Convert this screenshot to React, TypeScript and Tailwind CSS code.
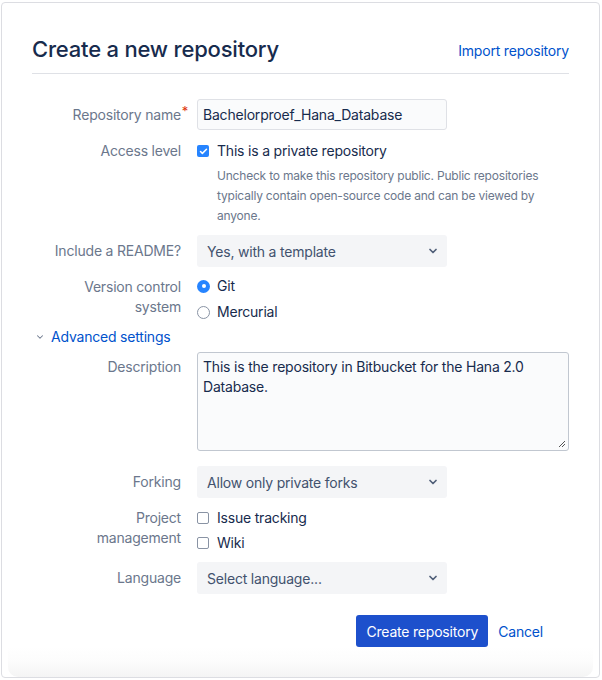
import { ChevronDown, Check } from "lucide-react";

function Label({ children, required }: { children: React.ReactNode; required?: boolean }) {
  return (
    <div className="w-[150px] shrink-0 pr-[1px] text-right text-[14px] leading-[20px] text-[#6b778c]">
      <span className="relative">
        {children}
        {required && (
          <span className="absolute -right-[7px] -top-[5px] text-[13px] text-[#de350b]">*</span>
        )}
      </span>
    </div>
  );
}

function Select({ value }: { value: string }) {
  return (
    <div className="flex h-[32px] w-[250px] items-center justify-between rounded-[3px] bg-[#f4f5f7] pl-[10px] pr-[8px] text-[14px] text-[#42526e]">
      <span>{value}</span>
      <ChevronDown className="h-[12px] w-[12px] text-[#505f79]" strokeWidth={3.5} />
    </div>
  );
}

function Box({ checked }: { checked?: boolean }) {
  return checked ? (
    <span className="flex h-[12px] w-[12px] items-center justify-center rounded-[2px] bg-[#2684ff]">
      <Check className="h-[9px] w-[9px] text-white" strokeWidth={4} />
    </span>
  ) : (
    <span className="h-[12px] w-[12px] rounded-[2px] border border-[#8993a4] bg-white" />
  );
}

function Radio({ checked }: { checked?: boolean }) {
  return checked ? (
    <span className="flex h-[13px] w-[13px] items-center justify-center rounded-full bg-[#2684ff]">
      <span className="h-[4px] w-[4px] rounded-full bg-white" />
    </span>
  ) : (
    <span className="h-[13px] w-[13px] rounded-full border border-[#8993a4] bg-white" />
  );
}

export default function App() {
  return (
    <div
      className="h-[680px] w-[602px] bg-white pt-[2px] pl-[1px] tracking-[-0.2px]"
      style={{ fontFamily: "Inter, 'Noto Sans', sans-serif" }}
    >
      <div className="flex h-[676px] w-[599px] flex-col rounded-[4px] border border-[#dcdde2] bg-white">
        <div className="flex-1 px-[30px]">
          {/* header */}
          <div className="flex items-end justify-between border-b border-[#dfe1e6] pt-[30px] pb-[8px]">
            <h1 className="text-[22px] font-medium leading-[32px] tracking-[-0.2px] text-[#172b4d]">
              Create a new repository
            </h1>
            <a className="pb-[4px] text-[14px] text-[#0052cc]">Import repository</a>
          </div>

          {/* repo name */}
          <div className="mt-[25px] flex items-center gap-[15px]">
            <Label required>Repository name</Label>
            <div className="flex h-[31px] w-[250px] items-center rounded-[3px] border border-[#dfe1e6] bg-[#fafbfc] px-[5px] text-[14px] text-[#172b4d]">
              Bachelorproef_Hana_Database
            </div>
          </div>

          {/* access */}
          <div className="mt-[11px] flex gap-[15px]">
            <Label>Access level</Label>
            <div>
              <label className="flex items-center gap-[8px] text-[14px] leading-[20px] text-[#172b4d]">
                <Box checked />
                This is a private repository
              </label>
              <p className="mt-[5px] w-[360px] pl-[20px] text-[12px] leading-[20px] text-[#6b778c]">
                Uncheck to make this repository public. Public repositories typically contain open-source code and can be viewed by anyone.
              </p>
            </div>
          </div>

          {/* readme */}
          <div className="mt-[9px] flex items-center gap-[15px]">
            <Label>Include a README?</Label>
            <Select value="Yes, with a template" />
          </div>

          {/* vcs */}
          <div className="mt-[9px] flex gap-[15px]">
            <div className="pt-[1px]">
              <Label>
                Version control
                <br />
                system
              </Label>
            </div>
            <div className="flex flex-col gap-[6px] text-[14px] leading-[20px] text-[#172b4d]">
              <label className="flex items-center gap-[7px]">
                <Radio checked />
                Git
              </label>
              <label className="flex items-center gap-[7px]">
                <Radio />
                Mercurial
              </label>
            </div>
          </div>

          {/* advanced */}
          <div className="mt-[5px] flex items-center gap-[6px] pl-[3px] text-[14px] leading-[20px] text-[#0052cc]">
            <ChevronDown className="h-[10px] w-[10px] text-[#6b778c]" strokeWidth={2.5} />
            Advanced settings
          </div>

          {/* description */}
          <div className="mt-[5px] flex gap-[15px]">
            <div className="pt-[5px]">
              <Label>Description</Label>
            </div>
            <div className="relative h-[99px] w-[374px] rounded-[3px] border border-[#c1c7d0] bg-[#fafbfc] px-[5px] pt-[4px] text-[14px] leading-[20px] text-[#172b4d]">
              This is the repository in Bitbucket for the Hana 2.0 Database.
              <svg className="absolute bottom-[2px] right-[2px]" width="8" height="8" viewBox="0 0 8 8">
                <path d="M7 1L1 7M7 4L4 7" stroke="#555" strokeWidth="1" />
              </svg>
            </div>
          </div>

          {/* forking */}
          <div className="mt-[15px] flex items-center gap-[15px]">
            <Label>Forking</Label>
            <Select value="Allow only private forks" />
          </div>

          {/* project mgmt */}
          <div className="mt-[10px] flex gap-[15px]">
            <Label>
              Project
              <br />
              management
            </Label>
            <div className="flex flex-col gap-[5px] text-[14px] leading-[20px] text-[#172b4d]">
              <label className="flex items-center gap-[8px]">
                <Box />
                Issue tracking
              </label>
              <label className="flex items-center gap-[8px]">
                <Box />
                Wiki
              </label>
            </div>
          </div>

          {/* language */}
          <div className="mt-[9px] flex items-center gap-[15px]">
            <Label>Language</Label>
            <Select value="Select language..." />
          </div>

          {/* buttons */}
          <div className="mt-[21px] flex items-center justify-end pr-[16px]">
            <button className="h-[32px] w-[132px] rounded-[3px] bg-[#1d50cc] text-[14px] text-white">
              Create repository
            </button>
            <a className="px-[10px] text-[14px] text-[#0052cc]">Cancel</a>
          </div>
        </div>
        <div className="mx-[6px] h-[40px] rounded-b-[10px] bg-gradient-to-b from-white via-[#fcfcfc] to-[#f4f4f4]" />
      </div>
    </div>
  );
}
